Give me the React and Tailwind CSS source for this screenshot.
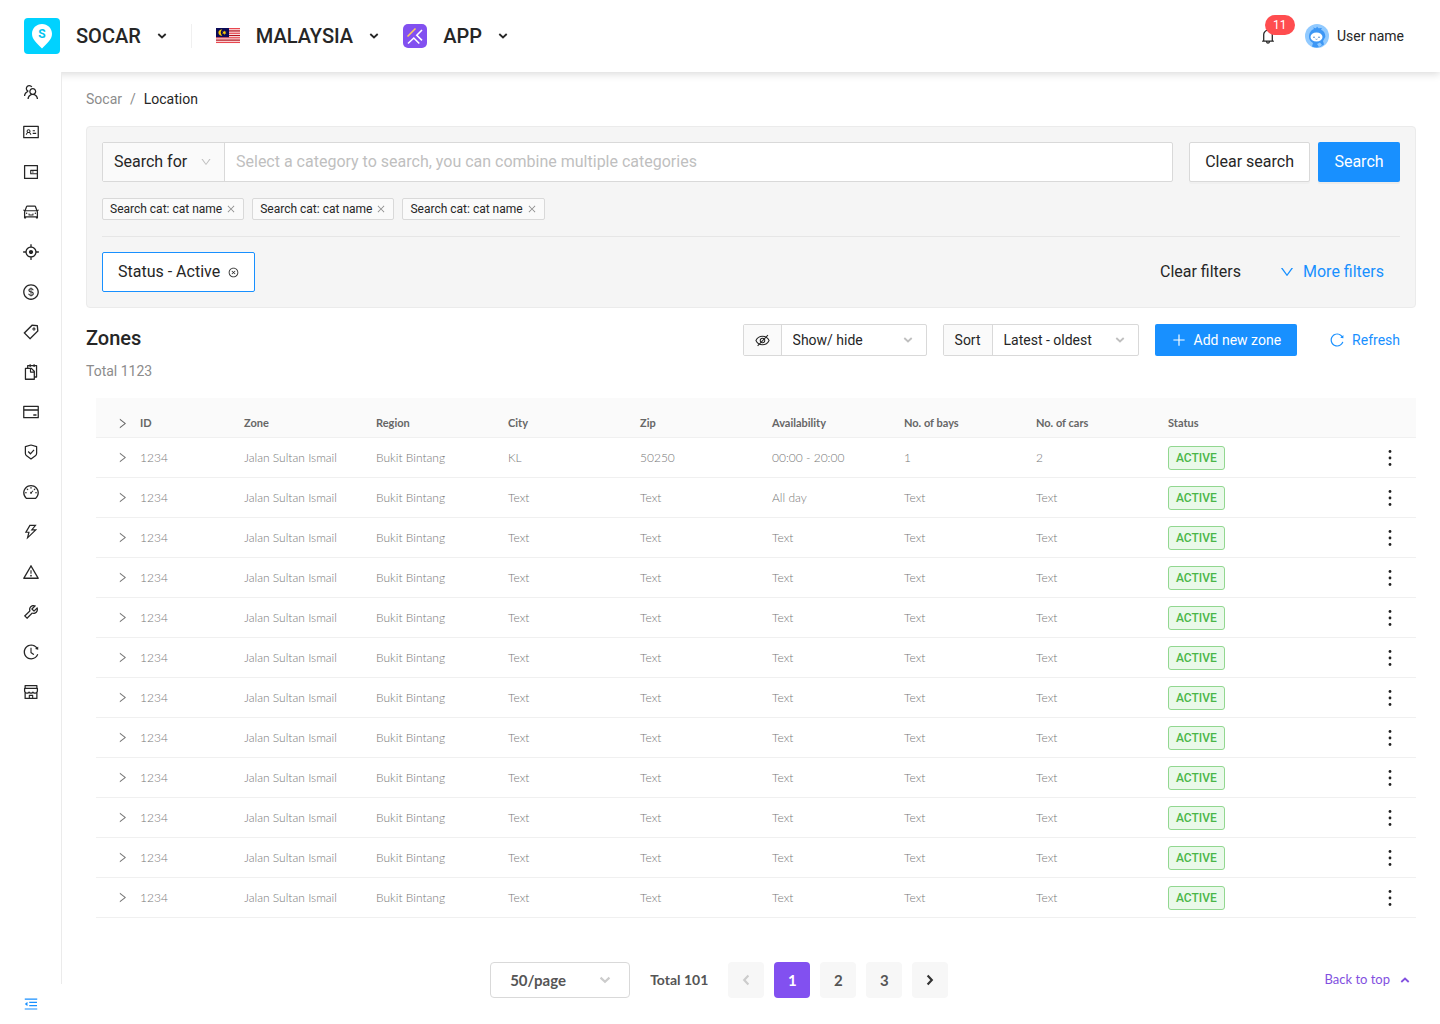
import React from 'react';
import {
  AiOutlineTeam,
  AiOutlineIdcard,
  AiOutlineWallet,
  AiOutlineCar,
  AiOutlineAim,
  AiOutlineDollarCircle,
  AiOutlineTag,
  AiOutlineSnippets,
  AiOutlineCreditCard,
  AiOutlineDashboard,
  AiOutlineThunderbolt,
  AiOutlineWarning,
  AiOutlineTool,
  AiOutlineHistory,
  AiOutlineShop,
  AiOutlineMenuFold,
  AiOutlineBell,
  AiOutlineDown,
  AiOutlineRight,
  AiOutlineClose,
  AiOutlineCloseCircle,
  AiOutlinePlus,
  AiOutlineReload,
} from 'react-icons/ai';

const navItems = [
  { label: 'Users', Icon: AiOutlineTeam },
  { label: 'Licences', Icon: AiOutlineIdcard },
  { label: 'Wallet', Icon: AiOutlineWallet },
  { label: 'Cars', Icon: AiOutlineCar },
  { label: 'Location', Icon: AiOutlineAim },
  { label: 'Pricing', Icon: AiOutlineDollarCircle },
  { label: 'Promotions', Icon: AiOutlineTag },
  { label: 'Documents', Icon: AiOutlineSnippets },
  { label: 'Payments', Icon: AiOutlineCreditCard },
  { label: 'Insurance', Icon: ShieldCheck },
  { label: 'Dashboard', Icon: AiOutlineDashboard },
  { label: 'Charging', Icon: AiOutlineThunderbolt },
  { label: 'Incidents', Icon: AiOutlineWarning },
  { label: 'Maintenance', Icon: AiOutlineTool },
  { label: 'History', Icon: AiOutlineHistory },
  { label: 'Shops', Icon: AiOutlineShop },
];

const columns = ['Zone', 'Region', 'City', 'Zip', 'Availability', 'No. of bays', 'No. of cars', 'Status'];

const textRow = (availability) => [
  'Jalan Sultan Ismail', 'Bukit Bintang', 'Text', 'Text', availability, 'Text', 'Text',
];

const rows = [
  ['Jalan Sultan Ismail', 'Bukit Bintang', 'KL', '50250', '00:00 - 20:00', '1', '2'],
  textRow('All day'),
  ...Array.from({ length: 10 }, () => textRow('Text')),
];

const searchTags = [1, 2, 3];

function ShieldCheck({ className }) {
  return (
    <svg className={className} viewBox="0 0 16 16" fill="none" stroke="currentColor" strokeWidth="1.1">
      <path d="M8 1.8 13 3.200v5.800c0 1-.4 1.800-1.100 2.300L8 14.200l-3.900-2.900C3.400 10.800 3 10 3 9V3.200z" strokeLinejoin="round" />
      <path d="m5.500 7.600 2 2 3.200-3.500" />
    </svg>
  );
}

// Bold chevron shared by the header switchers, selects and pager
function Chevron({ className = 'size-2.5' }) {
  return (
    <svg className={className} viewBox="0 0 10 10" fill="none" stroke="currentColor" strokeWidth="1.800">
      <path d="M1.300 3 5 6.500 8.700 3" />
    </svg>
  );
}

function SocarLogo() {
  return (
    <span className="relative flex size-9 items-center justify-center rounded bg-[#00d2ff]">
      <svg width="36" height="36" viewBox="0 0 36 36">
        <path d="M18 6c5.600 0 10 4.300 10 9.800C28 22 22.500 25.500 18 30.500 13.500 25.500 8 22 8 15.800 8 10.300 12.400 6 18 6z" fill="#fff" />
      </svg>
      <span className="absolute inset-x-0 top-2 text-center text-xs leading-4 font-bold text-[#00c4f0]">S</span>
    </span>
  );
}

function MalaysiaFlag() {
  return (
    <svg width="24" height="16" viewBox="0 0 24 16">
      <rect width="24" height="16" fill="#fff" />
      {[0, 1, 2, 3, 4, 5, 6].map((i) => (
        <rect key={i} y={i * 2.290} width="24" height="1.300" fill={i % 2 ? '#b5121b' : '#e8474f'} />
      ))}
      <rect width="13" height="9.200" fill="#0b0b57" />
      <path d="M6.300 1.600a3.100 3.100 0 1 0 0 6 3.600 3.600 0 0 1 0-6z" fill="#fc0" />
      <path d="m8.300 2.400.6 1.300 1.400-.2-.8 1.100.8 1.200-1.400-.2-.6 1.300-.6-1.300-1.400.2.800-1.200-.8-1.100 1.400.2z" fill="#fc0" />
    </svg>
  );
}

function AppLogo() {
  return (
    <svg width="24" height="24" viewBox="0 0 24 24" fill="none">
      <rect width="24" height="24" rx="5" fill="#8250f0" />
      <path d="m4.500 12.500 8-8" stroke="#ffcf5c" strokeWidth="1.600" />
      <path d="m19 6-5.200 5.200 5.200 5.200M5 19.500l5.800-5.500 5.500 5.500" stroke="#fff" strokeWidth="1.600" />
    </svg>
  );
}

function Avatar() {
  return (
    <svg width="24" height="24" viewBox="0 0 24 24">
      <circle cx="12" cy="12" r="12" fill="#91caff" />
      <path d="M4 13c0-4 2-7 5-8l-1-1.500 3 .8L12 2.500l1.500 1.800L17 4l-1 1.700c3 1.300 4.600 4 4.300 7.300L18 17l1 3.500A12 12 0 0 1 7 22.500L8 19c-2.500-1.500-4-3.500-4-6z" fill="#3d97f5" />
      <ellipse cx="11.500" cy="13" rx="6" ry="4.600" fill="#fff" />
      <circle cx="9" cy="13.300" r=".7" fill="#2468b8" />
      <circle cx="14" cy="13.300" r=".7" fill="#2468b8" />
      <path d="M10.500 15q1 .8 2 0" fill="none" stroke="#2468b8" strokeWidth=".6" />
      <path d="m12 20 3-1.500 2 2.500-3 2z" fill="#91caff" />
    </svg>
  );
}

function HiddenEye() {
  return (
    <svg width="15" height="15" viewBox="0 0 16 16" fill="none" stroke="currentColor" strokeWidth="1.100">
      <path d="M1 8C2.400 5 4.800 3.500 8 3.500S13.600 5 15 8c-1.400 3-3.800 4.500-7 4.500S2.400 11 1 8z" />
      <circle cx="8" cy="8" r="2.400" />
      <path d="M2.800 13.800 13.800 2.200" />
    </svg>
  );
}

function HeaderSwitch({ logo, label }) {
  return (
    <button type="button" className="flex items-center gap-4">
      {logo}
      <span className="text-xl leading-7 font-medium">{label}</span>
      <Chevron />
    </button>
  );
}

function Header() {
  return (
    <header className="relative flex h-18 items-center bg-white pr-9 pl-6 shadow-[0_2px_8px_rgba(0,0,0,0.15)]">
      <HeaderSwitch logo={<SocarLogo />} label="SOCAR" />
      <div className="mx-6 h-6 border-l border-[#f0f0f0]" />
      <div className="flex gap-6">
        <HeaderSwitch logo={<MalaysiaFlag />} label="MALAYSIA" />
        <HeaderSwitch logo={<AppLogo />} label="APP" />
      </div>
      <div className="ml-auto flex items-center gap-7">
        <button type="button" aria-label="Notifications" className="relative">
          <AiOutlineBell className="size-4.5" />
          <span className="absolute -top-3 left-1.5 h-5 rounded-full bg-[#ff4d4f] px-2 text-xs leading-5 text-white">11</span>
        </button>
        <button type="button" className="flex items-center gap-2 text-sm">
          <Avatar />
          User name
        </button>
      </div>
    </header>
  );
}

function Sidebar() {
  return (
    <aside className="relative z-10 flex w-[62px] shrink-0 flex-col bg-white">
      <nav className="flex flex-1 flex-col items-center gap-[22px] border-r border-[#ebebeb] pt-[11px]">
        {navItems.map(({ label, Icon }) => (
          <a key={label} href="#" aria-label={label}>
            <Icon className="size-4.5" />
          </a>
        ))}
      </nav>
      <button type="button" aria-label="Collapse menu" className="flex h-10 items-center justify-center text-[#1890ff]">
        <AiOutlineMenuFold className="size-4" />
      </button>
    </aside>
  );
}

function SearchPanel() {
  return (
    <section className="flex flex-col gap-4 rounded border border-[#ebebeb] bg-[#f5f5f5] p-[15px]">
      <div className="flex gap-2 text-base">
        <div className="mr-2 flex h-10 flex-1 rounded-xs border border-[#d9d9d9] bg-white">
          <div className="relative flex w-[122px] border-r border-[#d9d9d9] bg-[#fafafa]">
            <select aria-label="Search category" className="w-full appearance-none pl-[11px]">
              <option>Search for</option>
            </select>
            <AiOutlineDown className="pointer-events-none absolute top-[13px] right-3 size-3 text-[#bfbfbf]" />
          </div>
          <input
            type="text"
            aria-label="Search"
            placeholder="Select a category to search, you can combine multiple categories"
            className="flex-1 px-[11px] outline-none placeholder:text-[#bfbfbf]"
          />
        </div>
        <button type="button" className="rounded-xs border border-[#d9d9d9] bg-white px-[15px] shadow-[0_2px_0_rgba(0,0,0,0.02)]">Clear search</button>
        <button type="button" className="min-w-[82px] rounded-xs bg-[#1890ff] px-4 text-white shadow-[0_2px_0_rgba(0,0,0,0.04)]">Search</button>
      </div>

      <div className="flex gap-2">
        {searchTags.map((tag) => (
          <span key={tag} className="flex h-[22px] items-center gap-1 rounded-xs border border-[#d9d9d9] bg-[#fafafa] px-[7px] text-xs">
            Search cat: cat name
            <button type="button" aria-label="Remove search tag" className="text-[#8c8c8c]">
              <AiOutlineClose className="size-2.5" />
            </button>
          </span>
        ))}
      </div>

      <div className="flex items-center border-t border-[#e6e6e6] pt-[15px] text-base">
        <button type="button" className="flex h-10 items-center gap-2 rounded-xs border border-[#1890ff] bg-white px-[15px]">
          Status - Active
          <AiOutlineCloseCircle className="size-[11px]" />
        </button>
        <button type="button" className="ml-auto">Clear filters</button>
        <button type="button" className="ml-[38px] flex items-center gap-2 pr-4 text-[#1890ff]">
          <AiOutlineDown className="size-4" />
          More filters
        </button>
      </div>
    </section>
  );
}

function ToolbarSelect({ addon, label, value, className }) {
  return (
    <div className={`flex h-8 rounded-xs border border-[#d9d9d9] ${className}`}>
      <span className="flex items-center border-r border-[#d9d9d9] bg-[#fafafa] px-[11px]">{addon}</span>
      <div className="relative flex flex-1">
        <select aria-label={label} className="w-full appearance-none pl-[11px]">
          <option>{value}</option>
        </select>
        <Chevron className="pointer-events-none absolute top-2.5 right-[13px] size-2.5 text-[#bfbfbf]" />
      </div>
    </div>
  );
}

function Toolbar() {
  return (
    <div className="mt-4 flex items-start justify-between text-sm">
      <div>
        <h1 className="text-xl leading-7 font-medium">Zones</h1>
        <p className="mt-2 leading-[22px] text-[#8c8c8c]">Total 1123</p>
      </div>
      <div className="flex gap-4">
        <ToolbarSelect addon={<HiddenEye />} label="Show or hide columns" value="Show/ hide" className="w-46" />
        <ToolbarSelect addon="Sort" label="Sort" value="Latest - oldest" className="w-49" />
        <button type="button" className="flex h-8 items-center gap-[7px] rounded-xs bg-[#1890ff] px-4 text-white">
          <AiOutlinePlus className="size-4" />
          Add new zone
        </button>
        <button type="button" className="flex h-8 items-center gap-[7px] px-4 text-[#1890ff]">
          <AiOutlineReload className="size-4" />
          Refresh
        </button>
      </div>
    </div>
  );
}

function ZonesTable() {
  return (
    <table className="mt-4 ml-2.5 w-[calc(100%-10px)] table-fixed border-separate border-spacing-0 text-left font-[Lato,sans-serif] text-xs [&_td]:border-b [&_td]:border-[#f0f0f0] [&_th]:border-b [&_th]:border-[#f0f0f0]">
      <thead>
        <tr className="h-10 bg-[#fafafa] text-[11px] text-[#666]">
          <th className="w-11 pt-3 pl-5"><AiOutlineRight className="size-[13px]" /></th>
          <th className="w-26 pt-3 font-bold">ID</th>
          {columns.map((name) => (
            <th key={name} className="w-[10%] pt-3 font-bold">{name}</th>
          ))}
          <th aria-label="Actions" />
        </tr>
      </thead>
      <tbody>
        {rows.map((cells, index) => (
          <tr key={index} className="h-10 font-light text-[#777]">
            <td className="pl-5">
              <button type="button" aria-label="Expand row" className="block">
                <AiOutlineRight className="size-[13px]" />
              </button>
            </td>
            <td>1234</td>
            {cells.map((cell, i) => (
              <td key={i}>{cell}</td>
            ))}
            <td>
              <span className="inline-flex h-6 items-center rounded-[3px] border border-[#92d790] bg-[#eaf9ea] px-[7px] align-middle font-[Roboto,sans-serif] font-medium text-[#4ab648]">ACTIVE</span>
            </td>
            <td className="pr-[18px]">
              <button type="button" aria-label="Row actions" className="ml-auto block text-[#222]">
                <svg width="16" height="20" viewBox="0 0 16 20" fill="currentColor">
                  <circle cx="8" cy="3.500" r="1.400" />
                  <circle cx="8" cy="10" r="1.400" />
                  <circle cx="8" cy="16.500" r="1.400" />
                </svg>
              </button>
            </td>
          </tr>
        ))}
      </tbody>
    </table>
  );
}

function Pagination() {
  return (
    <div className="mt-11 flex items-center font-[Lato,sans-serif] font-bold text-[#555]">
      <div className="flex flex-1 items-center justify-center pl-7">
        <div className="relative flex h-9 w-35 rounded border border-[#d9d9d9]">
          <select aria-label="Rows per page" className="w-full appearance-none pl-[19px] text-[15px]">
            <option>50/page</option>
          </select>
          <Chevron className="pointer-events-none absolute top-[11px] right-[18px] size-3 text-[#ccc]" />
        </div>
        <span className="mx-5 text-sm">Total 101</span>
        <div className="flex gap-2.5 text-[15px]">
          <button type="button" aria-label="Previous page" className="flex size-9 items-center justify-center rounded bg-[#f7f7f7] text-[#ccc]">
            <Chevron className="size-3 rotate-90" />
          </button>
          <button type="button" className="size-9 rounded bg-[#8250f0] text-white">1</button>
          <button type="button" className="size-9 rounded bg-[#f7f7f7]">2</button>
          <button type="button" className="size-9 rounded bg-[#f7f7f7]">3</button>
          <button type="button" aria-label="Next page" className="flex size-9 items-center justify-center rounded bg-[#f7f7f7] text-[#333]">
            <Chevron className="size-3 -rotate-90" />
          </button>
        </div>
      </div>
      <a href="#" className="flex items-center gap-2.5 pr-1.5 text-[13px] font-normal text-[#8250e0]">
        Back to top
        <Chevron className="size-2.5 rotate-180" />
      </a>
    </div>
  );
}

const App = () => {
  return (
    <div className="flex min-h-screen flex-col bg-white font-[Roboto,sans-serif] text-[#262626]">
      <Header />
      <div className="flex flex-1">
        <Sidebar />
        <main className="min-w-0 flex-1 px-6 pt-4">
          <nav aria-label="Breadcrumb" className="mb-4 flex gap-2 text-sm leading-[22px] text-[#8c8c8c]">
            <a href="#">Socar</a>
            <span>/</span>
            <a href="#" className="text-[#262626]">Location</a>
          </nav>
          <SearchPanel />
          <Toolbar />
          <ZonesTable />
          <Pagination />
        </main>
      </div>
    </div>
  );
};

export default App;
